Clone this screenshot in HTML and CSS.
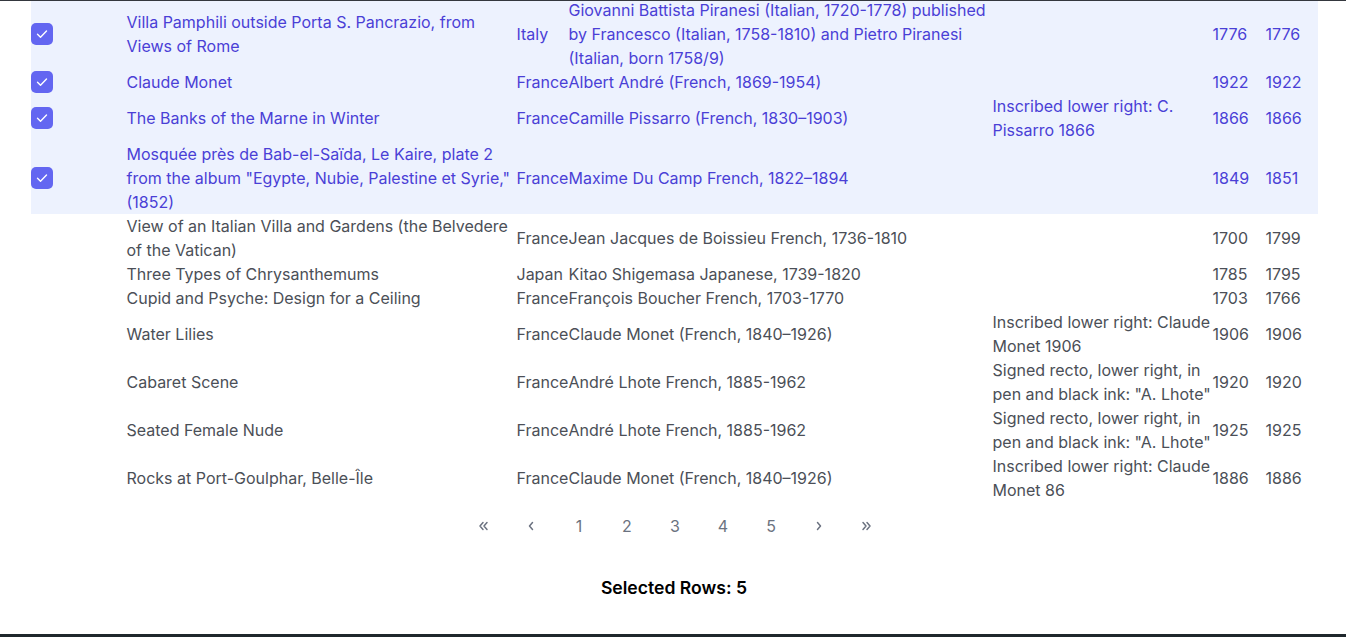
FILE: index.html
```html
<!DOCTYPE html>
<html lang="en">
<head>
<meta charset="utf-8">
<title>Artworks table</title>
<link rel="stylesheet" href="styles.css">
</head>
<body>
<div class="topbar"></div>
<main class="page">
  <div class="table-wrap">
    <table class="grid">
      <colgroup>
        <col class="c-check"><col class="c-title"><col class="c-country"><col class="c-artist"><col class="c-ins"><col class="c-date"><col class="c-date2">
      </colgroup>
      <tbody>
        <tr class="sel">
          <td><span class="cb"><svg viewBox="0 0 22 22"><path d="M6.5 11.2l3 3 6-6.2"/></svg></span></td>
          <td>Villa Pamphili outside Porta S. Pancrazio, from Views of Rome</td>
          <td>Italy</td>
          <td>Giovanni Battista Piranesi (Italian, 1720-1778) published by Francesco (Italian, 1758-1810) and Pietro Piranesi (Italian, born 1758/9)</td>
          <td></td><td>1776</td><td>1776</td>
        </tr>
        <tr class="sel">
          <td><span class="cb"><svg viewBox="0 0 22 22"><path d="M6.5 11.2l3 3 6-6.2"/></svg></span></td>
          <td>Claude Monet</td>
          <td>France</td>
          <td>Albert André (French, 1869-1954)</td>
          <td></td><td>1922</td><td>1922</td>
        </tr>
        <tr class="sel">
          <td><span class="cb"><svg viewBox="0 0 22 22"><path d="M6.5 11.2l3 3 6-6.2"/></svg></span></td>
          <td>The Banks of the Marne in Winter</td>
          <td>France</td>
          <td>Camille Pissarro (French, 1830–1903)</td>
          <td>Inscribed lower right: C. Pissarro 1866</td><td>1866</td><td>1866</td>
        </tr>
        <tr class="sel">
          <td><span class="cb"><svg viewBox="0 0 22 22"><path d="M6.5 11.2l3 3 6-6.2"/></svg></span></td>
          <td>Mosquée près de Bab-el-Saïda, Le Kaire, plate 2 from the album "Egypte, Nubie, Palestine et Syrie," (1852)</td>
          <td>France</td>
          <td>Maxime Du Camp French, 1822–1894</td>
          <td></td><td>1849</td><td>1851</td>
        </tr>
        <tr>
          <td></td>
          <td>View of an Italian Villa and Gardens (the Belvedere of the Vatican)</td>
          <td>France</td>
          <td>Jean Jacques de Boissieu French, 1736-1810</td>
          <td></td><td>1700</td><td>1799</td>
        </tr>
        <tr>
          <td></td>
          <td>Three Types of Chrysanthemums</td>
          <td>Japan</td>
          <td>Kitao Shigemasa Japanese, 1739-1820</td>
          <td></td><td>1785</td><td>1795</td>
        </tr>
        <tr>
          <td></td>
          <td>Cupid and Psyche: Design for a Ceiling</td>
          <td>France</td>
          <td>François Boucher French, 1703-1770</td>
          <td></td><td>1703</td><td>1766</td>
        </tr>
        <tr>
          <td></td>
          <td>Water Lilies</td>
          <td>France</td>
          <td>Claude Monet (French, 1840–1926)</td>
          <td>Inscribed lower right: Claude Monet 1906</td><td>1906</td><td>1906</td>
        </tr>
        <tr>
          <td></td>
          <td>Cabaret Scene</td>
          <td>France</td>
          <td>André Lhote French, 1885-1962</td>
          <td>Signed recto, lower right, in pen and black ink: "A. Lhote"</td><td>1920</td><td>1920</td>
        </tr>
        <tr>
          <td></td>
          <td>Seated Female Nude</td>
          <td>France</td>
          <td>André Lhote French, 1885-1962</td>
          <td>Signed recto, lower right, in pen and black ink: "A. Lhote"</td><td>1925</td><td>1925</td>
        </tr>
        <tr>
          <td></td>
          <td>Rocks at Port-Goulphar, Belle-Île</td>
          <td>France</td>
          <td>Claude Monet (French, 1840–1926)</td>
          <td>Inscribed lower right: Claude Monet 86</td><td>1886</td><td>1886</td>
        </tr>
      </tbody>
    </table>
  </div>

  <nav class="pager">
    <button class="pg" aria-label="First"><svg viewBox="0 0 16 16"><path d="M8 4.5L5 8l3 3.5M12 4.5L9 8l3 3.5"/></svg></button>
    <button class="pg" aria-label="Previous"><svg viewBox="0 0 16 16"><path d="M9.5 4.5L6.5 8l3 3.5"/></svg></button>
    <button class="pg current">1</button>
    <button class="pg">2</button>
    <button class="pg">3</button>
    <button class="pg">4</button>
    <button class="pg">5</button>
    <button class="pg" aria-label="Next"><svg viewBox="0 0 16 16"><path d="M6.5 4.5L9.5 8l-3 3.5"/></svg></button>
    <button class="pg" aria-label="Last"><svg viewBox="0 0 16 16"><path d="M4 4.5L7 8l-3 3.5M8 4.5L11 8l-3 3.5"/></svg></button>
  </nav>

  <p class="selected">Selected Rows: 5</p>
</main>
<div class="bottombar"></div>
</body>
</html>
```

FILE: styles.css
```css
html, body {
  margin: 0;
  padding: 0;
  background: #ffffff;
}
body {
  font-family: Inter, "Noto Sans", sans-serif;
  font-size: 16px;
  line-height: 24px;
  color: #4b4f57;
  height: 637px;
  display: flex;
  flex-direction: column;
  overflow: hidden;
}
.topbar {
  height: 1px;
  background: #34373e;
  flex: none;
}
.page {
  flex: 1;
  display: flex;
  flex-direction: column;
  align-items: center;
}
.table-wrap {
  width: 1287px;
  margin-left: 2px;
  overflow: hidden;
}
.grid {
  margin-top: -3px;
  width: 1287px;
  table-layout: fixed;
  border-collapse: collapse;
  border-spacing: 0;
}
.c-check { width: 96px; }
.c-title { width: 390px; }
.c-country { width: 52px; }
.c-artist { width: 424px; }
.c-ins { width: 220px; }
.c-date { width: 53px; }
.c-date2 { width: 52px; }

.grid td {
  padding: 0;
  vertical-align: middle;
  text-align: left;
}
.grid td:nth-child(4) { padding-right: 4px; }
.grid tr.sel {
  background: #edf2fe;
  color: #4a3fd6;
}
.cb {
  display: block;
  width: 22px;
  height: 22px;
  border-radius: 5px;
  background: #6366f1;
}
.cb svg {
  display: block;
  width: 22px;
  height: 22px;
  fill: none;
  stroke: #ffffff;
  stroke-width: 1.4;
  stroke-linecap: round;
  stroke-linejoin: round;
}

.pager {
  display: flex;
  justify-content: center;
  margin-top: 12px;
  margin-left: 4px;
}
.pg {
  width: 48px;
  height: 24px;
  padding: 0;
  border: 0;
  background: transparent;
  font-family: Inter, "Noto Sans", sans-serif;
  font-size: 16px;
  line-height: 24px;
  color: #6b7280;
  display: flex;
  align-items: center;
  justify-content: center;
}
.pg svg {
  width: 16px;
  height: 16px;
  fill: none;
  stroke: #6b7280;
  stroke-width: 1.5;
  stroke-linecap: round;
  stroke-linejoin: round;
}
.selected {
  margin: 37px 0 0 2px;
  font-size: 17.6px;
  line-height: 26px;
  font-weight: 600;
  color: #000000;
}
.bottombar {
  height: 3px;
  background: #1f272c;
  flex: none;
}
```
